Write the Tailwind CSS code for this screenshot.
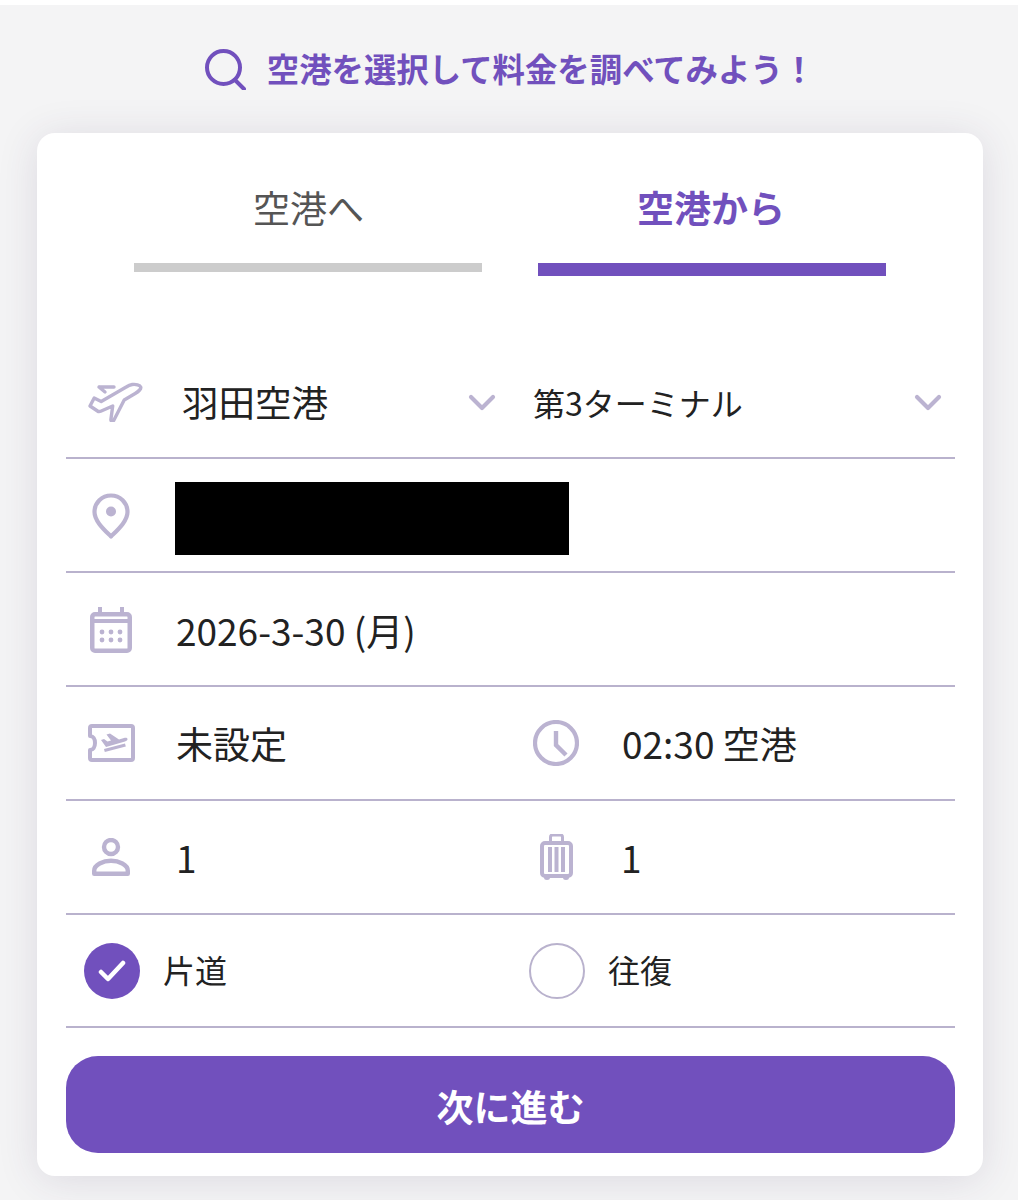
<!DOCTYPE html>
<html lang="ja">
<head>
<meta charset="utf-8">
<script src="https://cdn.jsdelivr.net/npm/@tailwindcss/browser@4"></script>
</head>
<body class="bg-white font-['Noto_Sans_CJK_JP','Noto_Sans',sans-serif]">
<div class="w-[1018px] h-[1200px] overflow-hidden bg-white pt-[5px]">
<div class="h-[1195px] bg-[#f4f4f5] pl-[37px] pr-[35px] flex flex-col">
  <div class="h-[128px] shrink-0 flex items-center justify-center gap-[21px] text-[#7150bd] pb-[2px]">
    <svg class="w-[41px] h-[41px] mt-[2px]" viewBox="0 0 41 41" fill="none" stroke="currentColor" stroke-width="4" stroke-linecap="round"><circle cx="18.500" cy="18.500" r="16.500"/><path d="M30 31l9 9"/></svg>
    <span class="text-[32.4px] leading-none font-bold whitespace-nowrap">空港を選択して料金を調べてみよう！</span>
  </div>
  <div class="h-[1043px] bg-white rounded-[18px] shadow-[0_4px_40px_rgba(60,50,90,0.13)] pl-[29px] pr-[28px] flex flex-col">
    <div class="h-[211px] shrink-0 grid grid-cols-2 gap-[56px] pl-[68px] pr-[69px] pt-[50px]">
      <div class="flex flex-col items-center">
        <div class="h-[80px] pb-[32px] flex items-center text-[37px] leading-none text-[#555555] ml-[1px]">空港へ</div>
        <div class="w-full h-[9px] bg-[#cccccc]"></div>
      </div>
      <div class="flex flex-col items-center">
        <div class="h-[80px] pb-[32px] flex items-center text-[37px] leading-none font-bold text-[#7150bd] -ml-[2px]">空港から</div>
        <div class="w-full h-[13px] bg-[#7150bd]"></div>
      </div>
    </div>

    <!-- row: airport -->
    <div class="h-[115px] shrink-0 border-b-2 border-[#b9b2cd] flex items-center text-[#222222]">
      <div class="w-[468px] flex items-center pl-[22px] shrink-0">
        <svg class="w-[56px] h-[42px] text-[#bbb3d1] shrink-0" viewBox="0 0 56 42" fill="none" stroke="currentColor" stroke-width="3.400" stroke-linejoin="round" stroke-linecap="round"><path d="M2 26l7.500 5c1 .7 2 .7 3.200.2l12-5.200-1.800 13.500c-.2 1.800 1.800 2.300 2.800 1l10.500-20.500 11-6.500c4-2.400 6-5 5.500-6.500-.7-2-5-3-8.500-2.500-2.500.4-4 1.200-6 2.500l-25 14.500-7-3.500z"/><path d="M11 7h15M17 12l-6-5"/></svg>
        <span class="ml-[38px] text-[36.500px] leading-none mt-[4px]">羽田空港</span>
        <svg class="w-[28px] h-[18px] ml-auto text-[#bbb3d1] mr-[38px] mt-[4px]" viewBox="0 0 28 18" fill="none" stroke="currentColor" stroke-width="4.200" stroke-linecap="round" stroke-linejoin="round"><path d="M3 3l11 11L25 3"/></svg>
      </div>
      <div class="flex-1 flex items-center">
        <span class="text-[32px] leading-none whitespace-nowrap mt-[2px] -ml-[1px]">第3ターミナル</span>
        <svg class="w-[28px] h-[18px] ml-auto text-[#bbb3d1] mr-[13px] mt-[4px]" viewBox="0 0 28 18" fill="none" stroke="currentColor" stroke-width="4.200" stroke-linecap="round" stroke-linejoin="round"><path d="M3 3l11 11L25 3"/></svg>
      </div>
    </div>

    <!-- row: address -->
    <div class="h-[114px] shrink-0 border-b-2 border-[#b9b2cd] flex items-center">
      <div class="w-[90px] shrink-0 flex justify-center">
        <svg class="w-[38px] h-[46px] text-[#bbb3d1] mt-[2px]" viewBox="0 0 38 46" fill="none"><path d="M19 43.500C12 36.500 2.500 28 2.500 19a16.500 16.500 0 0 1 33 0c0 9-9.500 17.500-16.500 24.500z" stroke="currentColor" stroke-width="4.200" stroke-linejoin="round"/><circle cx="19" cy="18.500" r="5" fill="currentColor"/></svg>
      </div>
      <div class="ml-[19px] w-[394px] h-[73px] bg-black mt-[6px]"></div>
    </div>

    <!-- row: date -->
    <div class="h-[114px] shrink-0 border-b-2 border-[#b9b2cd] flex items-center">
      <div class="w-[90px] shrink-0 flex justify-center">
        <svg class="w-[42px] h-[46px] text-[#bbb3d1] mt-[2px]" viewBox="0 0 42 46"><path fill="currentColor" d="M8 0h4v5h18V0h4v5h3a5 5 0 0 1 5 5v31a5 5 0 0 1-5 5H5a5 5 0 0 1-5-5V10a5 5 0 0 1 5-5h3zM4.500 16V41A.500.500 0 0 0 5 41.500h32a.500.500 0 0 0 .500-.500V16zM5 9.500A.500.500 0 0 0 4.500 10v2h33v-2a.500.500 0 0 0-.500-.500z"/><g fill="currentColor"><circle cx="12" cy="25" r="2.400"/><circle cx="21" cy="25" r="2.400"/><circle cx="30" cy="25" r="2.400"/><circle cx="12" cy="33" r="2.400"/><circle cx="21" cy="33" r="2.400"/><circle cx="30" cy="33" r="2.400"/></g></svg>
      </div>
      <span class="ml-[20px] text-[37px] leading-none text-[#222222] mt-[2px]">2026-3-30 (月)</span>
    </div>

    <!-- row: ticket / time -->
    <div class="h-[114px] shrink-0 border-b-2 border-[#b9b2cd] flex items-center text-[#222222]">
      <div class="w-[467px] shrink-0 flex items-center">
        <div class="w-[90px] shrink-0 flex justify-center">
          <svg class="w-[47px] h-[38px] text-[#bbb3d1]" viewBox="0 0 47 38" fill="none"><path d="M2 4a2 2 0 0 1 2-2h39a2 2 0 0 1 2 2v30a2 2 0 0 1-2 2H4a2 2 0 0 1-2-2v-8c3 0 5-3 5-7s-2-7-5-7z" stroke="currentColor" stroke-width="4" stroke-linejoin="round"/><path fill="currentColor" d="M13 16l3-1 3.500 2.500 3.500-1-4.500-6 3.500-1 9 6 5-1.500c2-.5 3.500 0 3.500 1.200 0 1-1 1.800-2.500 2.300L18 23z"/><path fill="currentColor" d="M16 25l21-5.500.800 3-21 5.500z"/></svg>
        </div>
        <span class="ml-[20px] text-[37px] leading-none">未設定</span>
      </div>
      <div class="flex-1 flex items-center">
        <svg class="w-[46px] h-[46px] text-[#bbb3d1] shrink-0" viewBox="0 0 46 46" fill="none" stroke="currentColor" stroke-width="4.200"><circle cx="23" cy="23" r="21"/><path d="M23 11v14l10 10" stroke-width="4.400"/></svg>
        <span class="ml-[43px] text-[37px] leading-none whitespace-nowrap">02:30 空港</span>
      </div>
    </div>

    <!-- row: passengers / luggage -->
    <div class="h-[114px] shrink-0 border-b-2 border-[#b9b2cd] flex items-center text-[#222222]">
      <div class="w-[467px] shrink-0 flex items-center">
        <div class="w-[90px] shrink-0 flex justify-center">
          <svg class="w-[38px] h-[38px] text-[#bbb3d1]" viewBox="0 0 38 38" fill="none" stroke="currentColor" stroke-width="4.400"><circle cx="19" cy="9" r="7"/><path d="M2.200 35.800v-3c0-6 9-10 16.800-10s16.800 4 16.800 10v3z" stroke-linejoin="round"/></svg>
        </div>
        <span class="ml-[20px] text-[37px] leading-none">1</span>
      </div>
      <div class="flex-1 flex items-center">
        <div class="w-[46px] shrink-0 flex justify-center">
          <svg class="w-[33px] h-[46px] text-[#bbb3d1]" viewBox="0 0 33 46" fill="none"><path d="M10.500 9V3a2 2 0 0 1 2-2h8a2 2 0 0 1 2 2v6" stroke="currentColor" stroke-width="3"/><rect x="2" y="9" width="29" height="33" rx="3" stroke="currentColor" stroke-width="4"/><path d="M8 13h4v25H8zM14.500 13h4v25h-4zM21 13h4v25h-4z" fill="currentColor"/><path d="M4 42h6v1.500a3 2.500 0 0 1-6 0zM23 42h6v1.500a3 2.500 0 0 1-6 0z" fill="currentColor"/></svg>
        </div>
        <span class="ml-[42px] text-[37px] leading-none">1</span>
      </div>
    </div>

    <!-- row: one way / round trip -->
    <div class="h-[113px] shrink-0 border-b-2 border-[#b9b2cd] flex items-center text-[#222222]">
      <div class="w-[463px] shrink-0 flex items-center pl-[18px]">
        <div class="w-[56px] h-[56px] rounded-full bg-[#7150bd] flex items-center justify-center shrink-0">
          <svg class="w-[28px] h-[24px]" viewBox="0 0 28 24" fill="none" stroke="white" stroke-width="4.500" stroke-linecap="round" stroke-linejoin="round"><path d="M3 13l7 7L25 4"/></svg>
        </div>
        <span class="ml-[23px] text-[32px] leading-none -mt-[4px]">片道</span>
      </div>
      <div class="flex-1 flex items-center">
        <div class="w-[56px] h-[56px] rounded-full border-2 border-[#b9b2cd] shrink-0"></div>
        <span class="ml-[23px] text-[32px] leading-none -mt-[4px]">往復</span>
      </div>
    </div>

    <button class="mt-[28px] h-[97px] w-full rounded-[32px] bg-[#7150bd] text-white text-[37px] leading-none font-bold pt-[3px]">次に進む</button>
  </div>
</div>
</div>
</body>
</html>
